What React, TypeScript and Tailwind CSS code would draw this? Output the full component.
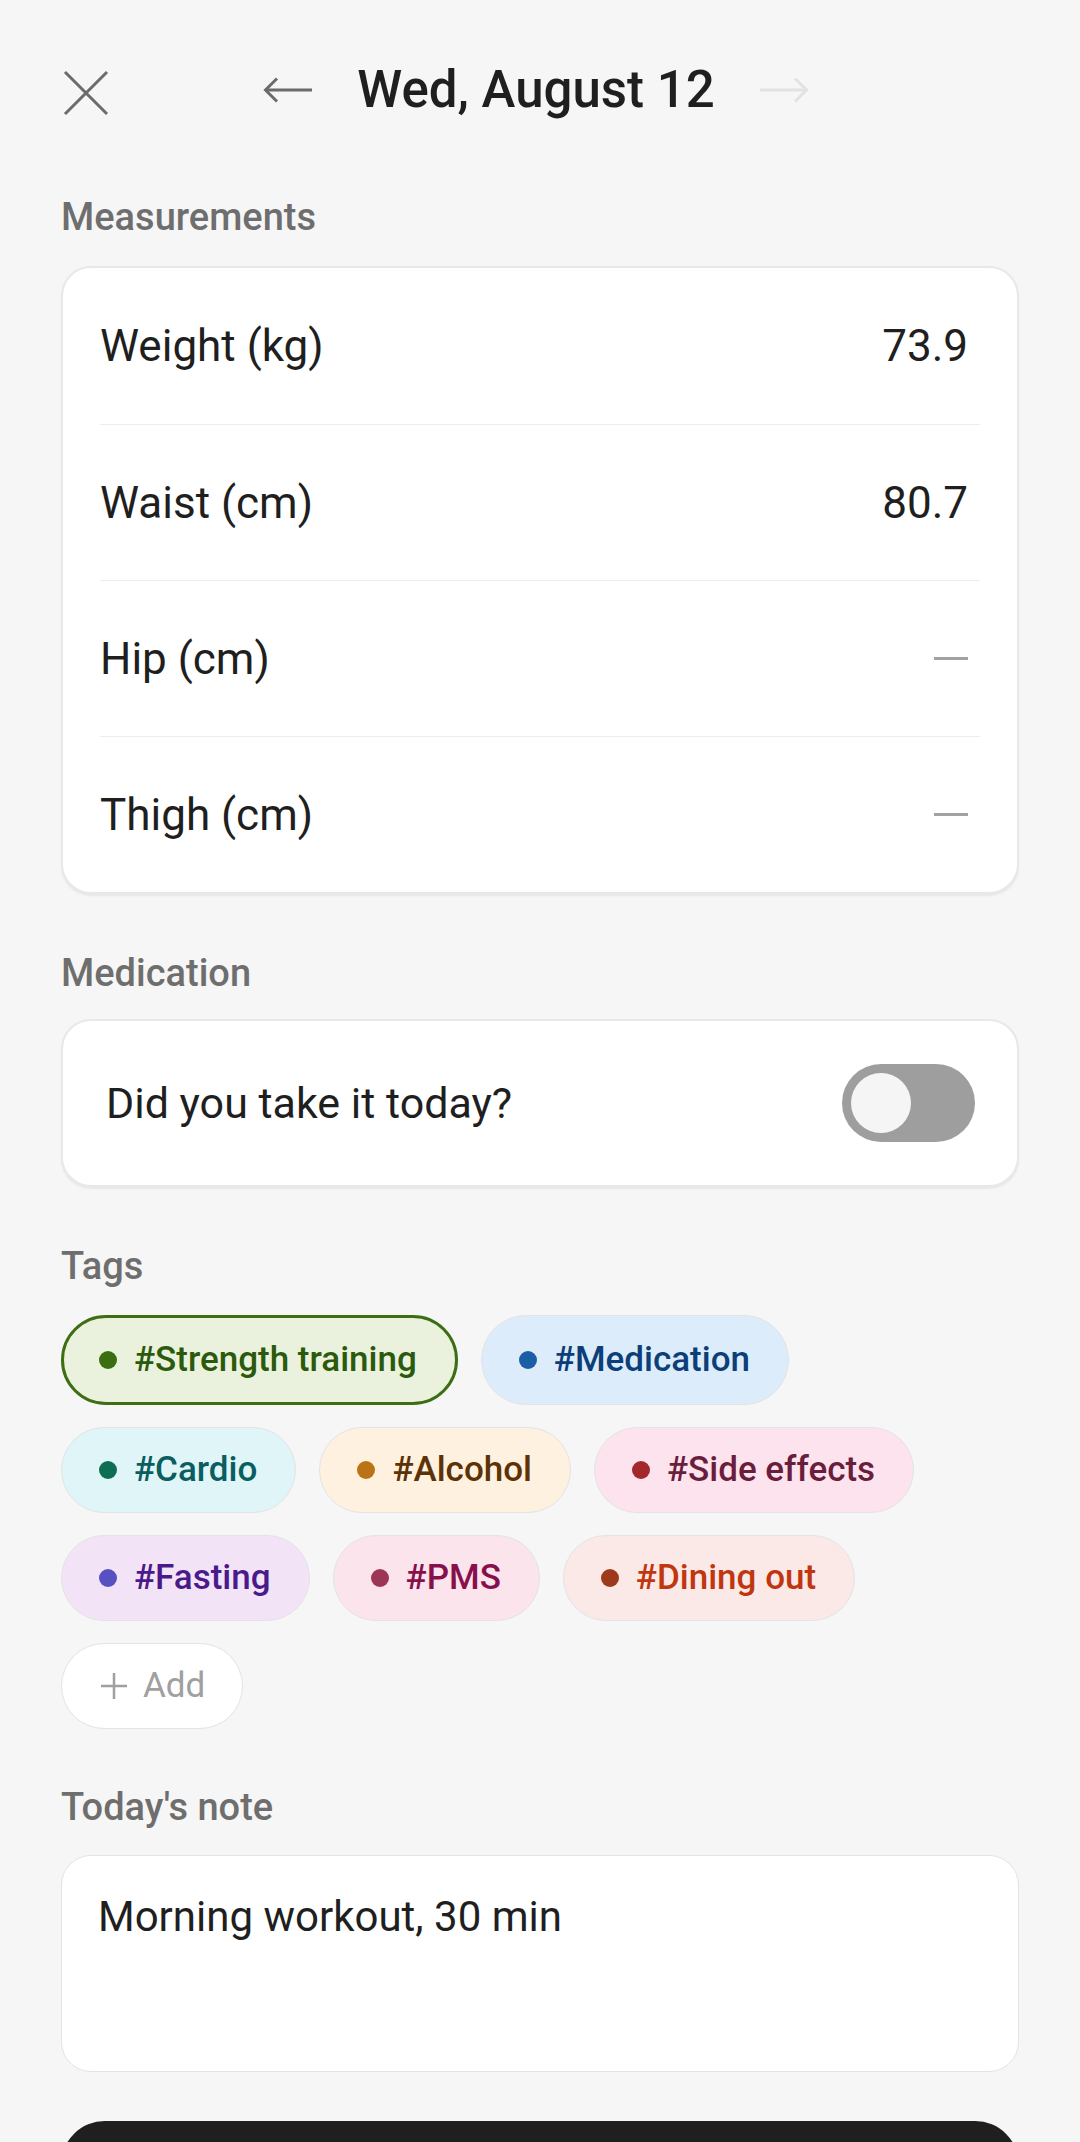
import { useState } from "react";

const measurements = [
    { label: "Weight (kg)", value: "73.9" },
    { label: "Waist (cm)", value: "80.7" },
    { label: "Hip (cm)", value: null },
    { label: "Thigh (cm)", value: null },
];

const tags = [
    { name: "#Strength training", bg: "bg-[#eaf2de]", dot: "bg-[#3b6e11]", text: "text-[#2b5a0c]" },
    { name: "#Medication", bg: "bg-[#dcecfb]", dot: "bg-[#1b5ea6]", text: "text-[#0c3f78]" },
    { name: "#Cardio", bg: "bg-[#dff5f8]", dot: "bg-[#0e6e54]", text: "text-[#0a5e60]" },
    { name: "#Alcohol", bg: "bg-[#fef1df]", dot: "bg-[#bb7318]", text: "text-[#5c3206]" },
    { name: "#Side effects", bg: "bg-[#fde3ee]", dot: "bg-[#a3282c]", text: "text-[#6b1d3c]" },
    { name: "#Fasting", bg: "bg-[#f2e4f6]", dot: "bg-[#5650c0]", text: "text-[#4a1a8c]" },
    { name: "#PMS", bg: "bg-[#fbe4ec]", dot: "bg-[#9c3556]", text: "text-[#880f4e]" },
    { name: "#Dining out", bg: "bg-[#fbe9e8]", dot: "bg-[#9e3a1c]", text: "text-[#c0360e]" },
];

function Arrow({ dir, color }: { dir: "left" | "right"; color: string }) {
    return (
        <svg width="50" height="26" viewBox="0 0 50 26" fill="none" stroke={color} strokeWidth="3"
            className={dir === "right" ? "rotate-180" : ""}>
            <path d="M2 13 H49" />
            <path d="M14 1.5 L2.5 13 L14 24.5" />
        </svg>
    );
}

function SectionLabel({ children }: { children: React.ReactNode }) {
    return <p className="text-[38px] leading-[44px] font-medium text-[#6e6e6e]">{children}</p>;
}

export default function App() {
    const [taken, setTaken] = useState(false);
    const [active, setActive] = useState<string[]>(["#Strength training"]);

    const toggleTag = (name: string) =>
        setActive((a) => (a.includes(name) ? a.filter((n) => n !== name) : [...a, name]));

    return (
        <div className="h-[2142px] overflow-hidden bg-[#f6f6f6] px-[61px] font-['Roboto',sans-serif] text-[#1f1f1f]">
            {/* Header */}
            <div className="relative flex h-[184px] items-center justify-center">
                <button className="absolute left-[2px] top-[70px]">
                    <svg width="46" height="46" viewBox="0 0 46 46" stroke="#6b6b6b" strokeWidth="3">
                        <path d="M2 2 L44 44 M44 2 L2 44" />
                    </svg>
                </button>
                <div className="flex items-center gap-[44px] -translate-x-[4px] -translate-y-[2px]">
                    <Arrow dir="left" color="#6b6b6b" />
                    <h1 className="text-[51px] leading-[60px] font-medium">Wed, August 12</h1>
                    <Arrow dir="right" color="#e2e2e2" />
                </div>
            </div>

            {/* Measurements */}
            <div className="mt-[11px]">
                <SectionLabel>Measurements</SectionLabel>
            </div>
            <div className="mt-[27px] rounded-[30px] border-2 border-[#e8e8e8] bg-white px-[37px] shadow-[0_2px_2px_rgba(0,0,0,0.06)]">
                {measurements.map((m, i) => (
                    <div
                        key={m.label}
                        className={`flex h-[156px] items-center justify-between ${i > 0 ? "border-t border-[#ececec]" : ""}`}
                    >
                        <span className="text-[44px] leading-[52px]">{m.label}</span>
                        <span className="mr-[12px] text-[44px] leading-[52px]">
                            {m.value ?? <span className="block h-[3px] w-[34px] bg-[#a2a2a2]" />}
                        </span>
                    </div>
                ))}
            </div>

            {/* Medication */}
            <div className="mt-[57px]">
                <SectionLabel>Medication</SectionLabel>
            </div>
            <div className="mt-[24px] flex h-[168px] items-center justify-between rounded-[30px] border-2 border-[#e8e8e8] bg-white pl-[43px] pr-[42px] shadow-[0_2px_2px_rgba(0,0,0,0.06)]">
                <span className="text-[43px] leading-[52px]">Did you take it today?</span>
                <button
                    onClick={() => setTaken(!taken)}
                    className={`flex h-[78px] w-[133px] items-center rounded-full px-[9px] ${taken ? "justify-end bg-[#3b6e11]" : "justify-start bg-[#9e9e9e]"}`}
                >
                    <span className="h-[60px] w-[60px] rounded-full bg-[#f5f5f5]" />
                </button>
            </div>

            {/* Tags */}
            <div className="mt-[57px]">
                <SectionLabel>Tags</SectionLabel>
            </div>
            <div className="mt-[27px] flex flex-wrap gap-x-[23px] gap-y-[22px]">
                {tags.map((t) => {
                    const on = active.includes(t.name);
                    return (
                        <button
                            key={t.name}
                            onClick={() => toggleTag(t.name)}
                            className={`flex items-center gap-[17px] rounded-full py-[21px] pr-[38px] ${t.bg} ${on ? "border-[3px] border-[#3d6e14] pl-[35px]" : "border border-[#e3e3e3] pl-[37px]"}`}
                        >
                            <span className={`h-[18px] w-[18px] rounded-full ${t.dot}`} />
                            <span className={`text-[35px] leading-[42px] font-medium ${t.text}`}>{t.name}</span>
                        </button>
                    );
                })}
                <button className="flex items-center gap-[16px] rounded-full border border-[#e3e3e3] bg-white py-[21px] pl-[39px] pr-[37px] text-[#a0a0a0]">
                    <svg width="26" height="26" viewBox="0 0 26 26" stroke="#a0a0a0" strokeWidth="2.5">
                        <path d="M13 0 V26 M0 13 H26" />
                    </svg>
                    <span className="text-[35px] leading-[42px]">Add</span>
                </button>
            </div>

            {/* Note */}
            <div className="mt-[56px]">
                <SectionLabel>Today's note</SectionLabel>
            </div>
            <div className="mt-[26px] h-[217px] rounded-[30px] border border-[#e3e3e3] bg-white pl-[36px] pt-[36px]">
                <p className="text-[42px] leading-[50px]">Morning workout, 30 min</p>
            </div>

            <button className="mt-[49px] h-[110px] w-full rounded-t-[44px] bg-[#1f1f1f]" />
        </div>
    );
}
